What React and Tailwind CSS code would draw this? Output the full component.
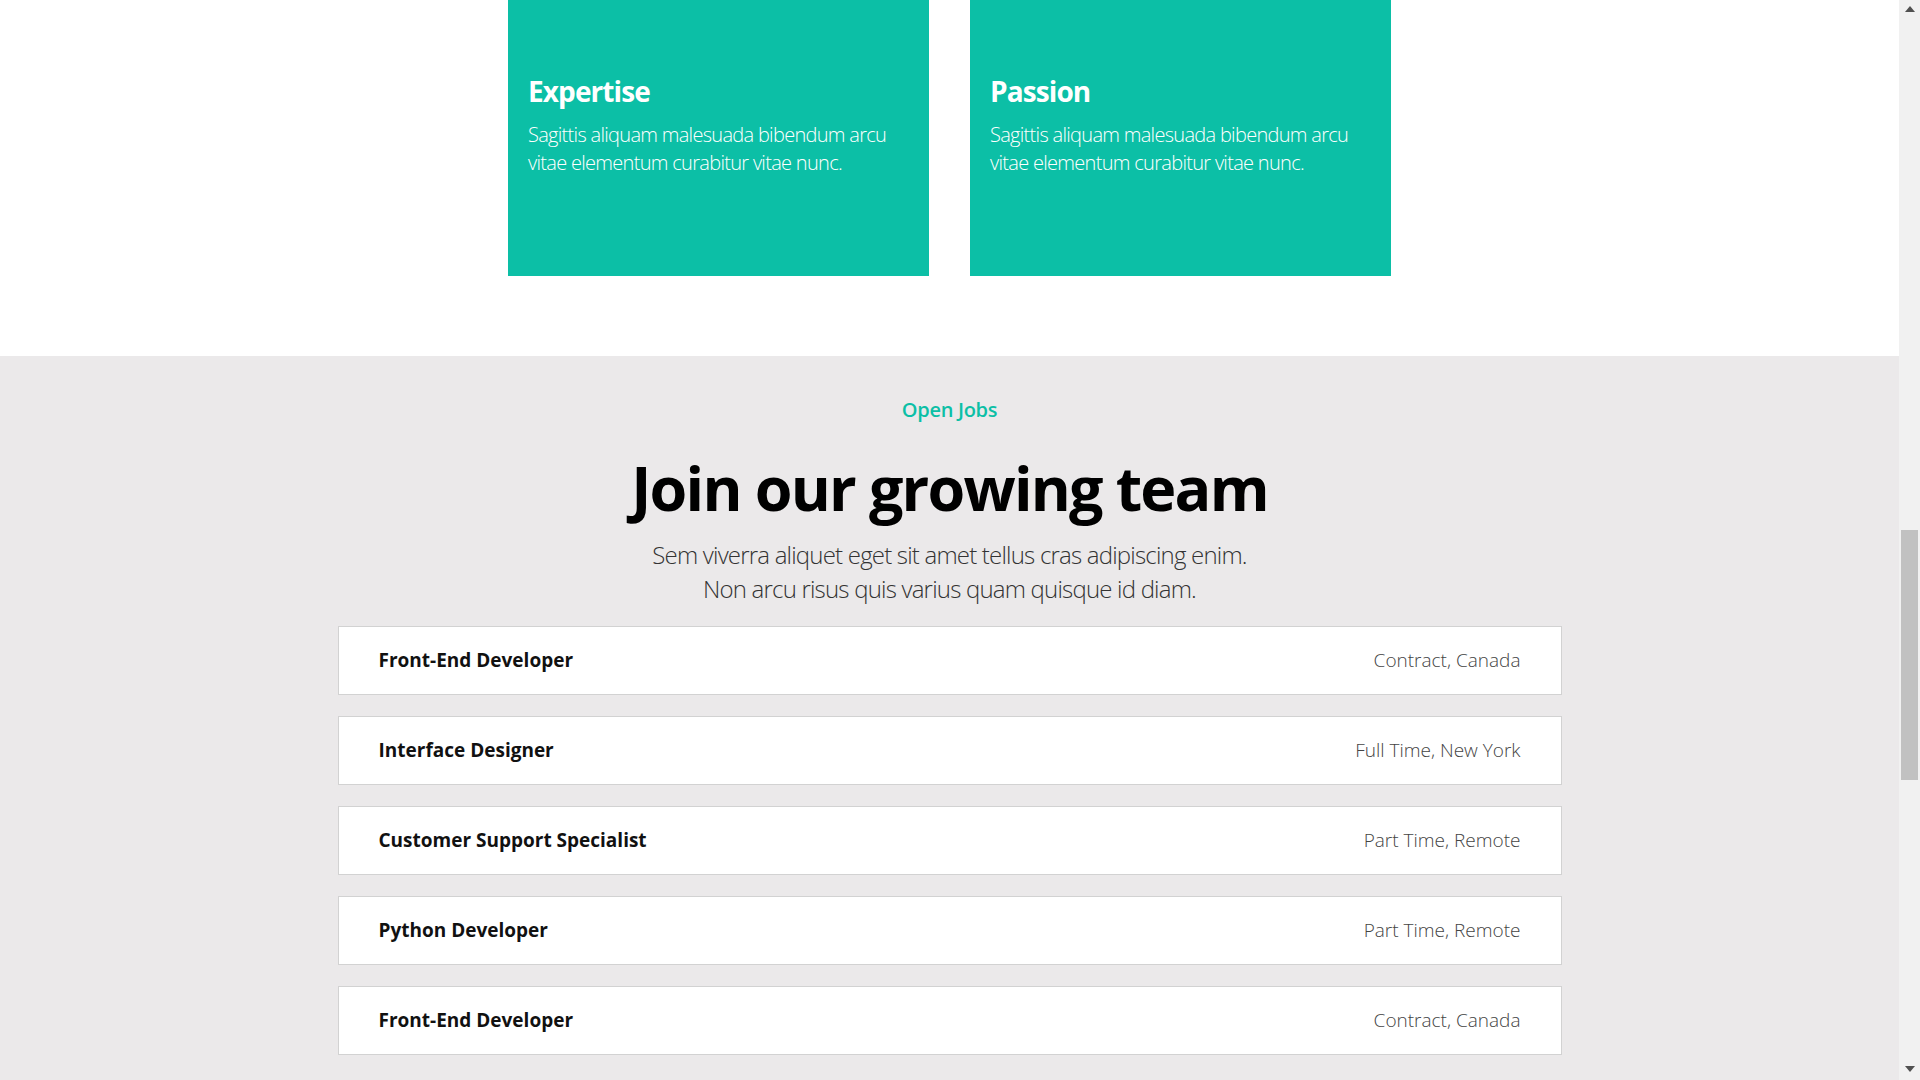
const cards = [
  { title: 'Expertise', text: 'Sagittis aliquam malesuada bibendum arcu vitae elementum curabitur vitae nunc.' },
  { title: 'Passion', text: 'Sagittis aliquam malesuada bibendum arcu vitae elementum curabitur vitae nunc.' },
];

const jobs = [
  { title: 'Front-End Developer', meta: 'Contract, Canada' },
  { title: 'Interface Designer', meta: 'Full Time, New York' },
  { title: 'Customer Support Specialist', meta: 'Part Time, Remote' },
  { title: 'Python Developer', meta: 'Part Time, Remote' },
  { title: 'Front-End Developer', meta: 'Contract, Canada' },
];

export default function App() {
  return (
    <div className="flex h-[1080px] w-[1920px] overflow-hidden font-['Open_Sans',sans-serif]">
      <main className="flex flex-1 flex-col">
        {/* values cards */}
        <section className="flex h-[356px] shrink-0 justify-center gap-[41px] bg-white">
          {cards.map((card) => (
            <div key={card.title} className="h-[276px] w-[421px] bg-[#0cbfa6] px-5 pt-[74px] text-white">
              <h3 className="text-[28px] font-bold leading-[34px] tracking-[-0.9px]">{card.title}</h3>
              <p className="mt-[13px] text-[20px] font-light leading-[28px] tracking-[-0.7px]">{card.text}</p>
            </div>
          ))}
        </section>

        {/* open jobs */}
        <section className="flex flex-1 flex-col items-center bg-[#ebe9ea] pt-10">
          <p className="text-[20px] font-semibold leading-[28px] text-[#0cbfa6] tracking-[-0.3px]">Open Jobs</p>
          <h2 className="mt-[27px] text-[61px] font-bold leading-[74px] tracking-[-1.8px] text-black">
            Join our growing team
          </h2>
          <p className="mt-[13px] text-center text-[24px] font-light leading-[34px] tracking-[-0.8px] text-[#333]">
            Sem viverra aliquet eget sit amet tellus cras adipiscing enim.
            <br />
            Non arcu risus quis varius quam quisque id diam.
          </p>

          <div className="mt-[20px] flex w-[1224px] flex-col gap-[21px]">
            {jobs.map((job, i) => (
              <div
                key={i}
                className="flex h-[69px] items-center justify-between border border-[#d2d2d2] bg-white px-10"
              >
                <span className="text-[19px] font-bold text-[#111]">{job.title}</span>
                <span className="text-[19px] font-light text-[#444]">{job.meta}</span>
              </div>
            ))}
          </div>
        </section>
      </main>

      {/* browser scrollbar */}
      <div className="flex w-[21px] shrink-0 flex-col items-center bg-[#f1f1f1]">
        <svg width="10" height="6" viewBox="0 0 10 6" className="mt-[6px]">
          <path d="M5 0 L10 6 L0 6 Z" fill="#505050" />
        </svg>
        <div className="mt-[518px] h-[250px] w-[17px] bg-[#c1c1c1]" />
        <div className="flex-1" />
        <svg width="10" height="6" viewBox="0 0 10 6" className="mb-[8px]">
          <path d="M0 0 L10 0 L5 6 Z" fill="#505050" />
        </svg>
      </div>
    </div>
  );
}
